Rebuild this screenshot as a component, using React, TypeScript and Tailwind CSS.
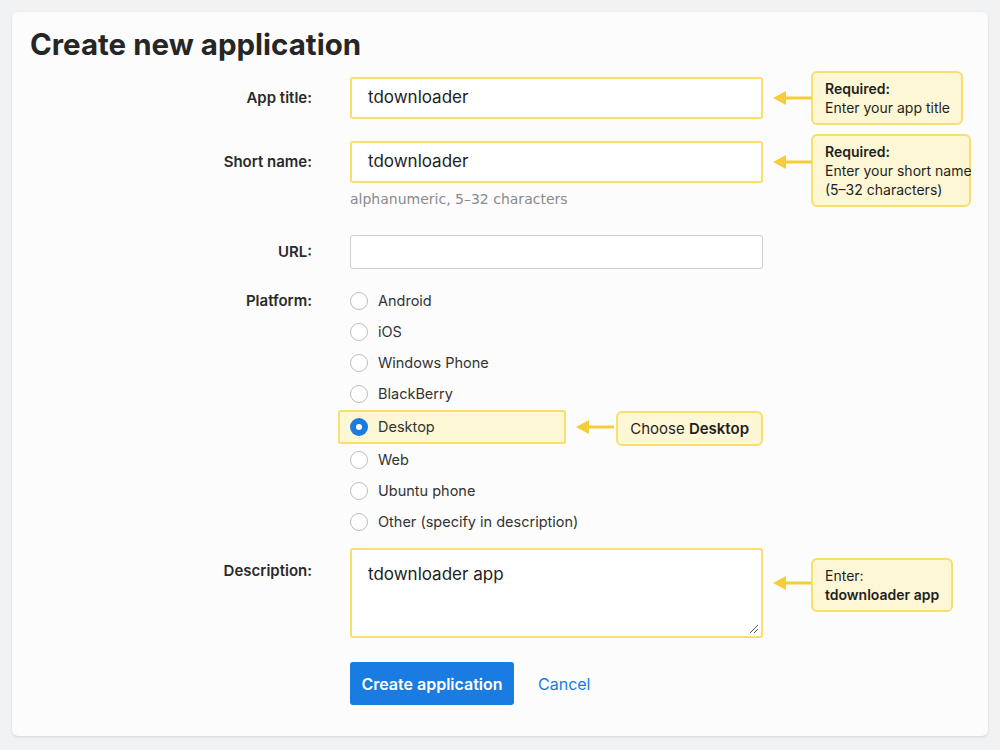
import React from "react";

const Arrow = ({ w = 38 }: { w?: number }) => (
  <svg width={w} height="16" viewBox={`0 0 ${w} 16`} className="shrink-0">
    <line x1="10" y1="8" x2={w} y2="8" stroke="#f5cd3a" strokeWidth="3" />
    <polygon points="0,8 13,1 13,15" fill="#f5cd3a" />
  </svg>
);

const Callout = ({ children, className = "" }: { children: React.ReactNode; className?: string }) => (
  <div className={"whitespace-nowrap rounded-md border-2 border-[#f8de6a] bg-[#fdf7d5] px-3 py-[6px] text-[14px] leading-[19px] text-[#1f1f1f] " + className}>
    {children}
  </div>
);

const Label = ({ children, className = "" }: { children: React.ReactNode; className?: string }) => (
  <div className={"w-[300px] shrink-0 text-right text-[15px] font-semibold text-[#2a2a2a] " + className}>{children}</div>
);

const Radio = ({ label, checked }: { label: string; checked?: boolean }) => (
  <div className="flex h-[31px] items-center gap-[10px]">
    {checked ? (
      <span className="flex h-[18px] w-[18px] items-center justify-center rounded-full bg-[#1a7be0]">
        <span className="h-[6px] w-[6px] rounded-full bg-white" />
      </span>
    ) : (
      <span className="h-[18px] w-[18px] rounded-full border border-[#bdbdbd] bg-white" />
    )}
    <span className="text-[14.5px] text-[#333]">{label}</span>
  </div>
);

export default function App() {
  const font = { fontFamily: "Inter, 'Noto Sans', sans-serif" };
  return (
    <div className="h-[750px] w-[1000px] bg-[#f1f2f4] p-[12px]" style={font}>
      <div className="h-[724px] w-[976px] rounded-md bg-[#fcfcfc] shadow-sm">
        <h1 className="pl-[18px] pt-[14px] text-[29.5px] font-bold leading-[36px] text-[#262626]">Create new application</h1>

        {/* App title */}
        <div className="relative mt-[15px] flex h-[42px] items-center">
          <Label>App title:</Label>
          <div className="ml-[38px] flex h-[42px] w-[413px] items-center rounded-[3px] border-2 border-[#f8de6a] bg-white px-4 text-[17px] text-[#222]">tdownloader</div>
          <div className="absolute left-[761px] top-[13px]"><Arrow /></div>
          <Callout className="absolute left-[799px] top-[-6px] w-[152px]"><b className="font-semibold">Required:</b><br />Enter your app title</Callout>
        </div>

        {/* Short name */}
        <div className="relative mt-[22px] flex h-[68px] items-start">
          <Label className="mt-[10px]">Short name:</Label>
          <div className="ml-[38px] w-[413px]">
            <div className="flex h-[42px] items-center rounded-[3px] border-2 border-[#f8de6a] bg-white px-4 text-[17px] text-[#222]">tdownloader</div>
            <div className="mt-[7px] text-[14px] leading-[18px] text-[#8a8a8a]" style={{ fontFamily: "'DejaVu Sans', sans-serif" }}>alphanumeric, 5–32 characters</div>
          </div>
          <div className="absolute left-[761px] top-[13px]"><Arrow /></div>
          <Callout className="absolute left-[799px] top-[-7px] w-[160px]"><b className="font-semibold">Required:</b><br />Enter your short name<br />(5–32 characters)</Callout>
        </div>

        {/* URL */}
        <div className="mt-[26px] flex h-[34px] items-center">
          <Label>URL:</Label>
          <div className="ml-[38px] h-[34px] w-[413px] rounded-[3px] border border-[#cfcfcf] bg-white" />
        </div>

        {/* Platform */}
        <div className="mt-[16px] flex items-start">
          <Label className="mt-[5px]">Platform:</Label>
          <div className="ml-[38px] w-[413px]">
            <Radio label="Android" />
            <Radio label="iOS" />
            <Radio label="Windows Phone" />
            <Radio label="BlackBerry" />
            <div className="flex h-[35px] items-center">
              <div className="-ml-[12px] flex h-[34px] w-[270px] items-center rounded-[3px] border-2 border-[#f8de6a] bg-[#fdf7d5] pl-[10px]">
                <Radio label="Desktop" checked />
              </div>
              <div className="ml-[10px]"><Arrow /></div>
              <Callout className="ml-[2px] mt-[3px] py-[6px] text-[15px]">Choose <b className="font-semibold">Desktop</b></Callout>
            </div>
            <Radio label="Web" />
            <Radio label="Ubuntu phone" />
            <Radio label="Other (specify in description)" />
          </div>
        </div>

        {/* Description */}
        <div className="relative mt-[11px] flex h-[90px] items-start">
          <Label className="mt-[12px]">Description:</Label>
          <div className="relative ml-[38px] h-[90px] w-[413px] rounded-[3px] border-2 border-[#f8de6a] bg-white px-4 pt-[12px] text-[17px] text-[#222]">
            tdownloader app
            <svg width="10" height="10" className="absolute bottom-[2px] right-[2px]">
              <line x1="1" y1="9" x2="9" y2="1" stroke="#555" />
              <line x1="5" y1="9" x2="9" y2="5" stroke="#555" />
            </svg>
          </div>
          <div className="absolute left-[761px] top-[27px]"><Arrow /></div>
          <Callout className="absolute left-[799px] top-[10px] w-[142px]">Enter:<br /><b className="font-semibold">tdownloader app</b></Callout>
        </div>

        {/* Buttons */}
        <div className="mt-[24px] flex items-center pl-[338px]">
          <button className="h-[43px] w-[164px] rounded-[3px] bg-[#1a7be0] text-[16px] font-semibold text-white">Create application</button>
          <span className="ml-[24px] text-[16px] text-[#1a7be0]">Cancel</span>
        </div>
      </div>
    </div>
  );
}
